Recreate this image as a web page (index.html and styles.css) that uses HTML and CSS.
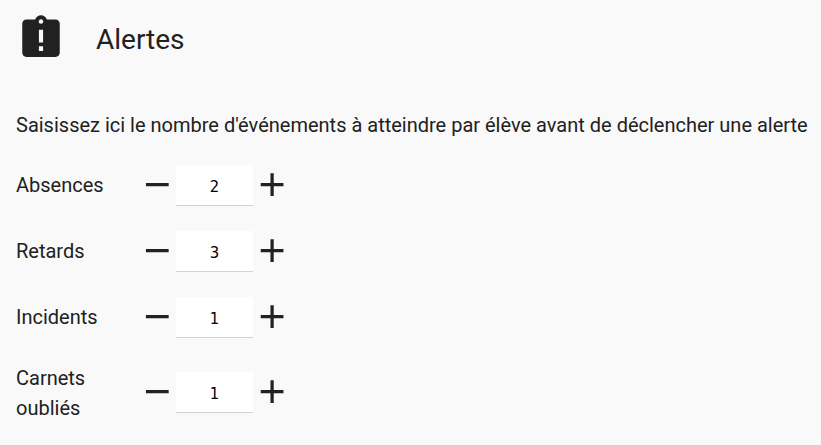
FILE: index.html
```html
<!DOCTYPE html>
<html lang="fr">
<head>
<meta charset="utf-8">
<title>Alertes</title>
<link rel="stylesheet" href="styles.css">
</head>
<body>
<header class="header">
<svg class="logo" viewBox="0 0 24 24"><path d="M19 3h-4.18C14.4 1.84 13.3 1 12 1s-2.4.84-2.82 2H5c-1.1 0-2 .9-2 2v14c0 1.1.9 2 2 2h14c1.1 0 2-.9 2-2V5c0-1.1-.9-2-2-2zm-6 15.1h-2v-2.2h2v2.2zm0-4h-2V8h2v6.1zm-1-9c-.62 0-1.1-.48-1.1-1.1s.48-1.1 1.1-1.1 1.1.48 1.1 1.1-.48 1.1-1.1 1.1z"/></svg>
<h1 class="title">Alertes</h1>
</header>
<main>
<p class="intro">Saisissez ici le nombre d'événements à atteindre par élève avant de déclencher une alerte</p>
<div class="row"><span class="label">Absences</span><svg class="icon minus" viewBox="0 0 24 24"><path d="M19 13H5v-2h14v2z"/></svg><input class="count" value="2"><svg class="icon" viewBox="0 0 24 24"><path d="M19 13h-6v6h-2v-6H5v-2h6V5h2v6h6v2z"/></svg></div>
<div class="row"><span class="label">Retards</span><svg class="icon minus" viewBox="0 0 24 24"><path d="M19 13H5v-2h14v2z"/></svg><input class="count" value="3"><svg class="icon" viewBox="0 0 24 24"><path d="M19 13h-6v6h-2v-6H5v-2h6V5h2v6h6v2z"/></svg></div>
<div class="row"><span class="label">Incidents</span><svg class="icon minus" viewBox="0 0 24 24"><path d="M19 13H5v-2h14v2z"/></svg><input class="count" value="1"><svg class="icon" viewBox="0 0 24 24"><path d="M19 13h-6v6h-2v-6H5v-2h6V5h2v6h6v2z"/></svg></div>
<div class="row row-tall"><span class="label">Carnets oubliés</span><svg class="icon minus" viewBox="0 0 24 24"><path d="M19 13H5v-2h14v2z"/></svg><input class="count" value="1"><svg class="icon" viewBox="0 0 24 24"><path d="M19 13h-6v6h-2v-6H5v-2h6V5h2v6h6v2z"/></svg></div>
</main>
</body>
</html>
```
FILE: styles.css
```css
* { box-sizing: border-box; }
body { margin: 0; padding: 13px 0 0 16px; background: #f9f9f9; color: #212121; font: 20px/30px Roboto, sans-serif; overflow: hidden; }
svg { display: block; fill: #212121; flex: none; }
.header { display: flex; align-items: center; height: 52px; }
.logo { width: 50px; height: 50px; transform: translateY(-0.8px); }
.title { margin: 2px 0 0 30px; font-size: 28px; font-weight: 400; line-height: 40px; }
.intro { margin: 45px 0 12px; white-space: nowrap; }
.row { display: flex; align-items: center; height: 66px; }
.row-tall { height: 84px; }
.label { width: 121px; padding-right: 30px; }
.row-tall .label { padding-top: 2px; }
.icon { width: 39px; height: 39px; transform: translate(-0.4px, -0.8px); }
.minus { transform: translate(0.8px, -0.8px); }
.count { width: 77px; height: 41px; margin: 0; padding: 3px 0 0; border: 0; border-bottom: 1px solid #d2d2d2; border-radius: 0; background: #fff; color: #000; font: 16.5px "DejaVu Sans Condensed", "DejaVu Sans", sans-serif; text-align: center; outline: 0; }
```
